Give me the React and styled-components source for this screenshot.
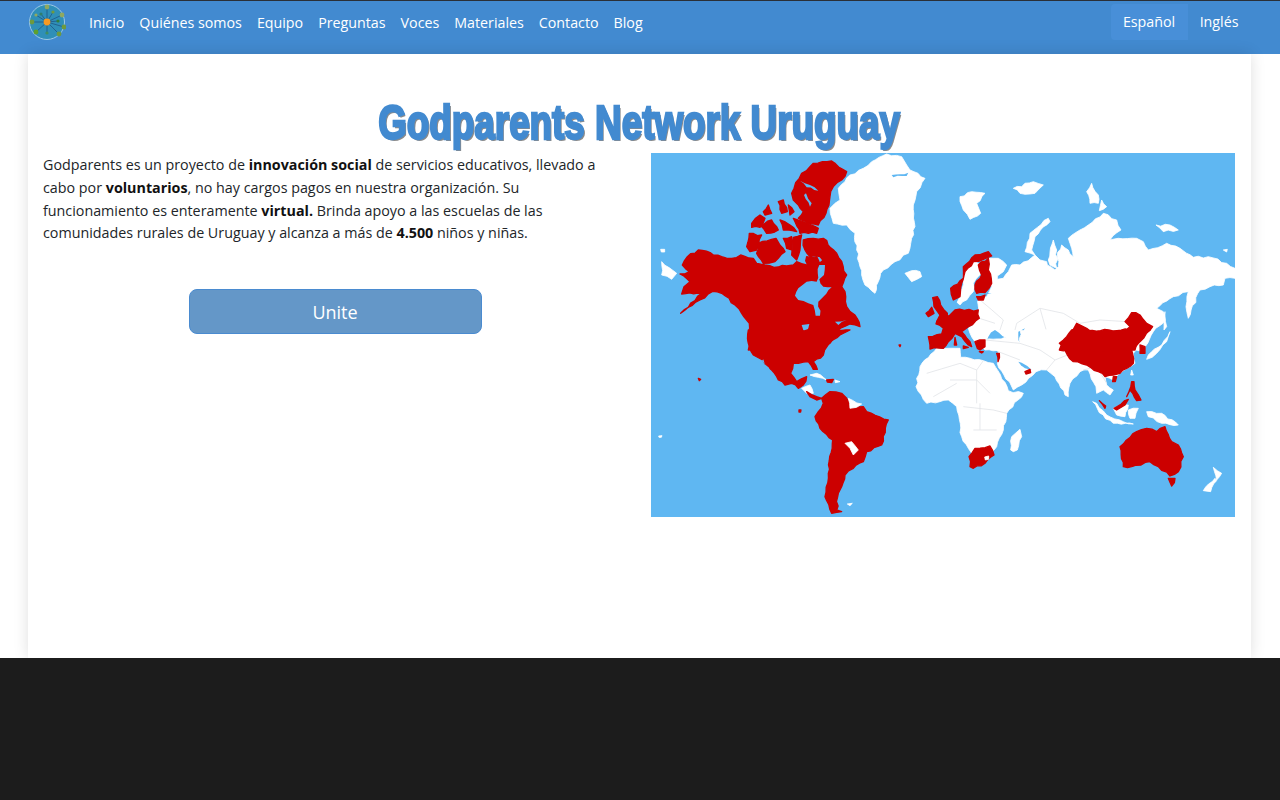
import React from 'react';
import styled, { createGlobalStyle } from 'styled-components';

const GlobalStyle = createGlobalStyle`
  html, body {
    margin: 0;
    height: 100%;
    background: #1c1c1c;
    font-family: "Open Sans", "Noto Sans", sans-serif;
  }
`;

const Page = styled.div`
  display: flex;
  flex-direction: column;
  height: 800px;
  overflow: hidden;
`;

const NavBar = styled.header`
  display: flex;
  align-items: flex-start;
  justify-content: space-between;
  box-sizing: border-box;
  height: 54px;
  padding: 2px 29px 0 28px;
  background: #428ad0;
  border-top: 1px solid #2a2f36;
`;

const NavLeft = styled.nav`
  display: flex;
  align-items: center;
  height: 38px;
`;

const LogoWrap = styled.div`
  display: flex;
  width: 38px;
  height: 38px;
  margin-right: 23px;
`;

const NavLink = styled.a`
  color: #fff;
  font-size: 14.25px;
  margin-right: 15px;
  white-space: nowrap;
`;

const LangGroup = styled.div`
  display: flex;
  align-items: center;
  height: 38px;
`;

const LangLink = styled.a`
  color: #fff;
  font-size: 14.25px;
  height: 36px;
  line-height: 36px;
  padding: 0 12.5px 0 12px;
  border-radius: 4px 0 0 4px;
  background: ${(p) => (p.$active ? '#488fd8' : 'transparent')};
`;

const Main = styled.main`
  flex: 0 0 604px;
  display: flex;
  background: #fff;
  padding: 0 29px 0 28px;
`;

const Card = styled.section`
  flex: 1;
  box-sizing: border-box;
  padding: 45px 16px 0 15px;
  background: #fff;
  box-shadow: 0 0 14px rgba(0, 0, 0, 0.13);
`;

const Title = styled.h1`
  margin: 0 0 7px;
  text-align: center;
  height: 47px;
  line-height: 47px;
  font-family: "Liberation Sans", sans-serif;
  font-size: 48px;
  font-weight: 700;
  color: #428ad0;
`;

const TitleText = styled.span`
  display: inline-block;
  white-space: nowrap;
  transform: scaleX(0.767);
  -webkit-text-stroke: 2.4px #428ad0;
  text-shadow: 2px 2px 0 #8b8b8b;
`;

const Columns = styled.div`
  display: flex;
  justify-content: space-between;
`;

const Intro = styled.div`
  width: 584px;
`;

const Paragraph = styled.p`
  margin: 1px 0 44px;
  font-size: 14.3px;
  line-height: 22.8px;
  color: #212529;
  white-space: nowrap;

  b {
    color: #111;
  }
`;

const JoinRow = styled.div`
  display: flex;
  justify-content: center;
`;

const JoinButton = styled.button`
  width: 293px;
  height: 45px;
  font-family: inherit;
  font-size: 18px;
  color: #fff;
  background: #6497c8;
  border: 1px solid #4a8bd0;
  border-radius: 8px;
`;

const MapFrame = styled.svg`
  display: block;
  flex: none;
  width: 584px;
  height: 364px;
  filter: blur(0.35px);
`;

const Footer = styled.footer`
  flex: 1;
  background: #1c1c1c;
`;

const RED = '#cc0000';
const SEA = '#5fb7f2';
const LAND = '#ffffff';
const LINE = '#e2e5e8';

// every layer is traced from a 3x crop, so the points use that crop's origin
const layers = [
  {
    at: [650, 150],
    shapes: [
      [LAND, '540,175 555,160 570,150 565,115 585,95 600,75 640,55 665,35 710,12 755,20 770,45 780,60 825,85 800,125 790,165 795,230 785,265 775,310 735,335 700,360 685,395 675,430 645,405 635,375 630,350 620,300 615,250 590,225 550,220'],
      [SEA, '725,75 775,68 770,78 730,82'],
      [LAND, '765,370 785,362 810,365 815,380 785,395'],
      [LAND, '35,335 80,370 65,388 35,375'],
      [LAND, '32,298 44,298 44,306 34,306'],
      [RED, '90,372 118,365 97,345 112,320 145,300 215,320 245,325 272,315 310,325 320,340 345,345 372,352 410,348 430,345 440,335 470,345 480,370 500,345 520,330 540,345 575,410 585,425 590,470 615,495 630,530 600,522 560,545 540,580 520,600 295,600 298,520 275,490 255,465 215,430 188,424 150,450 92,490 135,452 155,430 95,432 102,410 120,395'],
      [RED, '425,130 437,98 455,70 490,40 545,33 590,65 575,90 550,110 540,140 528,190 505,225 470,215 445,205 460,185 445,165 430,150'],
      [SEA, '450,92 480,105 505,122 470,112'],
      [SEA, '468,130 485,160 480,170 462,135'],
      [RED, '340,185 355,165 365,190 345,195'],
      [RED, '385,155 400,150 412,185 395,190'],
      [RED, '415,165 432,185 420,195'],
      [RED, '305,220 330,195 345,205 330,232 305,232'],
      [RED, '330,225 365,210 385,240 350,250'],
      [RED, '390,210 420,225 440,245 400,240'],
      [RED, '430,205 460,215 505,235 500,250 450,250'],
      [RED, '290,290 298,250 335,255 320,300 300,305'],
      [RED, '325,280 378,265 405,305 375,335 340,340 320,310'],
      [RED, '400,265 425,260 425,300 410,295'],
      [RED, '430,262 455,255 450,300 440,330 425,315'],
      [RED, '460,270 490,265 520,265 560,310 590,375 575,410 540,385 530,340 510,320 480,320 465,300'],
      [RED, '470,320 500,320 510,345 495,385 470,370'],
      [SEA, '435,437 445,415 470,395 500,395 508,345 525,345 522,375 508,388 520,410 545,412 520,440 505,455 510,497 497,497 490,465 445,450'],
      [SEA, '455,525 478,522 470,545 480,560 468,565 460,540'],
      [SEA, '490,540 500,552 495,575 488,565'],
      [SEA, '555,515 590,510 565,525'],
      [RED, '747,585 752,585 750,590'],
    ],
  },
  {
    at: [650, 330],
    shapes: [
      [RED, '295,0 600,0 570,15 540,35 520,75 490,95 502,118 490,118 475,95 430,100 422,130 440,155 470,140 460,165 445,175 425,160 405,165 385,150 365,120 338,90 310,75 295,40'],
      [SEA, '340,88 362,128 357,130 336,92'],
      [LAND, '455,175 480,165 490,190 470,190'],
      [RED, '470,185 500,200 515,205 500,210 480,200'],
      [LAND, '480,135 500,130 530,150 505,142'],
      [RED, '530,150 550,148 545,158 532,156'],
      [LAND, '555,150 570,155 556,158'],
      [RED, '495,260 520,220 515,205 540,185 575,190 590,205 600,235 640,230 650,245 715,270 695,345 650,365 640,395 610,415 585,435 575,470 565,490 560,540 575,545 545,550 525,500 535,430 548,330 510,295'],
      [LAND, '595,205 635,222 620,232 600,235'],
      [LAND, '585,340 605,335 625,360 610,375 600,355'],
      [LAND, '592,522 607,520 600,527'],
      [LAND, '26,318 36,317 34,322 27,322'],
      [RED, '145,145 152,148 148,152'],
      [RED, '447,240 453,240 452,246 447,246'],
    ],
  },
  {
    at: [940, 150],
    shapes: [
      [LAND, '145,325 175,325 200,345 190,365 172,378 172,388 190,385 205,365 215,345 240,345 285,315 300,330 320,335 322,345 345,360 355,350 352,320 365,285 385,300 400,320 395,295 385,265 420,240 445,225 490,190 530,210 543,240 510,270 535,265 590,265 610,275 625,300 680,280 720,295 760,322 805,320 860,340 885,355 885,385 855,385 850,405 810,410 780,420 745,505 738,470 745,425 700,440 650,475 670,485 675,510 640,545 610,600 135,600 105,575 85,535 118,505 112,450 140,440 155,410 145,370'],
      [LAND, '60,140 95,125 135,130 110,160 122,190 90,208 70,180'],
      [LAND, '220,115 280,95 310,105 285,130 240,130'],
      [LAND, '440,125 455,100 475,135 475,160 450,160'],
      [LAND, '485,150 500,170 478,182'],
      [LAND, '255,305 270,250 325,205 330,215 285,260 275,300 285,315'],
      [LAND, '325,330 340,270 350,300 350,355 330,345'],
      [LAND, '648,225 690,225 715,240 670,245'],
      [LAND, '850,300 862,298 860,306'],
      [LAND, '675,485 680,530 672,540'],
      [SEA, '145,560 165,540 200,565 175,570 140,572'],
      [SEA, '235,545 255,535 245,560 260,595 245,595 235,570'],
    ],
    lines: 'M230 520 L300 475 L370 490 L420 520 L480 510 L560 515 M120 450 L150 475 L190 510 L180 540 M118 505 L165 520 M230 520 L225 540 M300 475 L320 545 L400 560',
  },
  {
    at: [940, 330],
    shapes: [
      [LAND, '135,30 195,22 240,40 240,0 640,0 600,40 580,70 585,100 540,130 520,150 495,140 500,165 520,180 510,195 490,180 470,190 468,170 445,120 420,125 390,160 385,200 375,195 345,140 320,120 288,125 245,165 220,180 172,100 175,65'],
      [SEA, '235,95 255,115 275,120 262,108 245,98'],
      [LAND, '-10,55 60,55 62,82 130,92 160,100 205,182 250,190 200,250 190,300 170,350 145,380 100,380 65,320 50,230 25,210 -40,220 -72,170 -60,110'],
      [LAND, '212,360 215,320 240,298 245,320 232,360 220,365'],
      [LAND, '458,215 470,220 500,255 550,275 580,282 520,280 478,248'],
      [LAND, '520,235 565,225 555,260 530,255'],
      [LAND, '565,240 595,235 585,265 570,265'],
      [LAND, '620,245 665,250 715,285 665,280 625,260'],
      [LAND, '625,75 665,45 690,5 680,35 650,70 620,88'],
      [LAND, '575,120 580,135 572,135'],
      [LAND, '790,482 825,445 830,452 812,485'],
      [LAND, '820,412 845,430 830,450'],
    ],
    lines: 'M60 100 L110 120 L130 92 M30 150 L110 150 L150 190 M110 120 L110 220 M70 230 L160 240 L200 250 M100 300 L170 300 M120 220 L120 300 M240 40 L300 60 L345 90 L320 120 M345 90 L420 60 M430 120 L470 110 L500 160 M135 30 L240 40 M175 65 L240 90 M-40 130 L60 100 M-20 200 L50 160',
  },
  {
    at: [940, 330],
    shapes: [
      [RED, '87,380 105,355 150,348 162,375 135,400 100,415 90,410'],
      [LAND, '134,381 146,378 146,388 136,390'],
      [RED, '540,350 590,305 620,295 650,305 675,290 695,335 715,345 730,380 715,425 690,438 655,410 630,395 575,410 550,410'],
      [RED, '685,445 705,445 695,468'],
      [RED, '522,235 565,208 555,225 530,240'],
      [RED, '478,212 497,228 495,235'],
      [RED, '575,155 582,155 585,180 603,210 590,212 570,180 560,200'],
      [RED, '600,45 615,50 615,70 600,70'],
      [RED, '255,125 270,118 272,128 258,132'],
      [RED, '170,70 178,70 174,95'],
      [RED, '358,40 380,20 395,0 630,0 600,35 575,60 580,100 540,130 520,135 495,140 475,125 440,105 400,95 382,75'],
      [RED, '520,140 530,140 526,155 518,155'],
    ],
  },
  {
    at: [940, 150],
    shapes: [
      [RED, '358,600 410,520 440,535 490,565 540,565 570,530 555,515 575,488 600,495 620,520 638,530 600,565 585,600'],
    ],
  },
  {
    at: [920, 250],
    shapes: [
      [LAND, '130,90 135,60 165,35 185,45 180,75 160,100 160,125 140,150 120,165 110,160 120,140'],
      [SEA, '180,75 168,100 168,130 150,155 125,172 108,155 105,172 125,182 170,155 200,132 215,130 195,128 172,128'],
      [RED, '92,115 130,85 130,50 165,15 205,5 215,18 190,28 160,35 135,65 125,100 120,140 100,150'],
      [RED, '175,45 205,25 205,60 215,100 195,128 170,130 165,105 185,75'],
      [RED, '170,140 195,135 190,150 175,150'],
      [RED, '38,143 52,140 62,165 82,190 82,205 50,215 60,195 42,170'],
      [RED, '18,190 35,172 42,190 25,200'],
      [RED, '50,215 90,195 105,180 175,180 178,205 145,230 125,245 150,275 155,290 145,285 125,260 105,250 85,275 70,295 30,297 25,260 65,252 70,235 48,222'],
      [RED, '105,262 110,285 103,285'],
      [RED, '130,288 145,292 130,296'],
      [RED, '165,275 195,270 195,290 180,300 172,295'],
      [RED, '178,305 190,305 185,309'],
    ],
  },
];

// breaks long straight edges so the traced coasts don't look cut with a ruler
function roughen(points) {
  const pts = points.split(' ').map((p) => p.split(',').map(Number));
  const out = [];
  pts.forEach(([x, y], i) => {
    const [nx, ny] = pts[(i + 1) % pts.length];
    const len = Math.hypot(nx - x, ny - y);
    const steps = Math.floor(len / 12);
    out.push(`${x},${y}`);
    for (let s = 1; s < steps; s++) {
      const px = x + ((nx - x) * s) / steps;
      const py = y + ((ny - y) * s) / steps;
      const n = Math.sin(px * 12.9898 + py * 78.233) * 43758.5453;
      const r = (n - Math.floor(n) - 0.5) * 7;
      out.push(`${px - ((ny - y) / len) * r},${py + ((nx - x) / len) * r}`);
    }
  });
  return out.join(' ');
}

const outlineWidth = { [RED]: 4, [LAND]: 2.5, [SEA]: 0 };

function WorldMap() {
  return (
    <MapFrame viewBox="651 153 584 364" aria-label="Mapa del mundo">
      <rect x="640" y="140" width="610" height="390" fill={SEA} />
      {layers.map((layer, i) => (
        <g key={i} transform={`translate(${layer.at[0]} ${layer.at[1]}) scale(0.3333)`}>
          {layer.shapes.map(([fill, points], j) => (
            <polygon
              key={j}
              fill={fill}
              points={roughen(points)}
              stroke={fill}
              strokeWidth={outlineWidth[fill]}
              strokeLinejoin="round"
            />
          ))}
          {layer.lines && <path d={layer.lines} fill="none" stroke={LINE} strokeWidth="2.5" />}
        </g>
      ))}
    </MapFrame>
  );
}

function Logo() {
  const outer = [[19, 4, '#8fa860'], [34, 12, '#8fa860'], [31, 31, '#6e9a3e'], [8, 29, '#5fa02c'], [4, 19, '#6e9a3e'], [36, 24, '#6e9a3e']];
  const inner = [[13, 11, '#2f7f6e'], [25, 9, '#6e9a3e'], [30, 18, '#2f7f3e'], [19, 30, '#3f8f5e'], [8, 12, '#8fa860']];
  return (
    <svg viewBox="0 0 38 38" width="38" height="38">
      <circle cx="19" cy="19" r="17.5" fill="#2f8fb8" stroke="#9cc8e6" strokeWidth="1" />
      {[...outer, ...inner].map(([x, y], i) => (
        <line key={i} x1="19" y1="19" x2={x} y2={y} stroke="#1b4f80" strokeWidth="0.7" />
      ))}
      {outer.map(([x, y, c], i) => <circle key={i} cx={x} cy={y} r="2.4" fill={c} />)}
      {inner.map(([x, y, c], i) => <circle key={i} cx={x} cy={y} r="1.6" fill={c} />)}
      <circle cx="19" cy="19" r="3.4" fill="#f59a23" />
    </svg>
  );
}

const links = ['Inicio', 'Quiénes somos', 'Equipo', 'Preguntas', 'Voces', 'Materiales', 'Contacto', 'Blog'];

export default function App() {
  return (
    <Page>
      <GlobalStyle />
      <NavBar>
        <NavLeft>
          <LogoWrap><Logo /></LogoWrap>
          {links.map((l) => <NavLink key={l}>{l}</NavLink>)}
        </NavLeft>
        <LangGroup>
          <LangLink $active>Español</LangLink>
          <LangLink>Inglés</LangLink>
        </LangGroup>
      </NavBar>
      <Main>
        <Card>
          <Title><TitleText>Godparents Network Uruguay</TitleText></Title>
          <Columns>
            <Intro>
              <Paragraph>
                Godparents es un proyecto de <b>innovación social</b> de servicios educativos, llevado a<br />
                cabo por <b>voluntarios</b>, no hay cargos pagos en nuestra organización. Su<br />
                funcionamiento es enteramente <b>virtual.</b> Brinda apoyo a las escuelas de las<br />
                comunidades rurales de Uruguay y alcanza a más de <b>4.500</b> niños y niñas.
              </Paragraph>
              <JoinRow><JoinButton>Unite</JoinButton></JoinRow>
            </Intro>
            <WorldMap />
          </Columns>
        </Card>
      </Main>
      <Footer />
    </Page>
  );
}
